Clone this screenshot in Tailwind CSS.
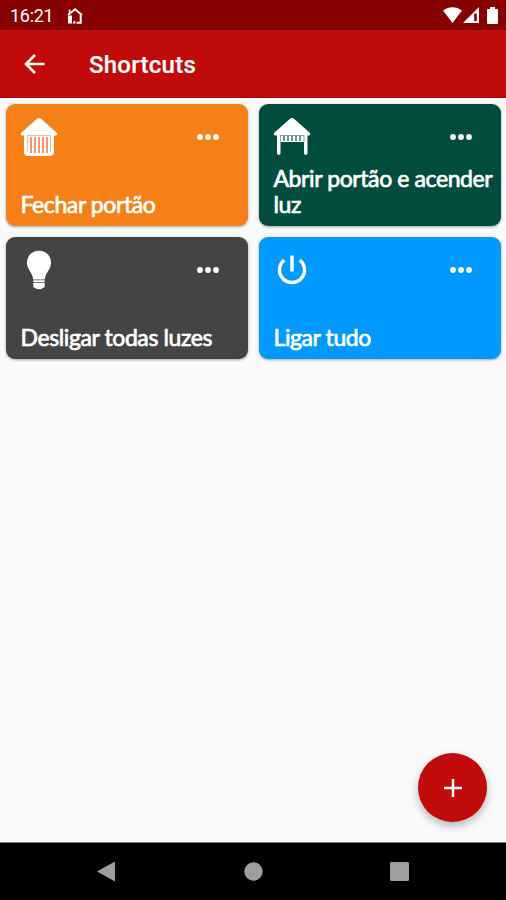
<!DOCTYPE html>
<html lang="pt">
<head>
  <meta charset="UTF-8">
  <meta name="viewport" content="width=device-width, initial-scale=1">
  <title>Shortcuts</title>
  <script src="https://cdn.jsdelivr.net/npm/@tailwindcss/browser@4"></script>
</head>
<body class="bg-[#fafafa] h-screen flex flex-col overflow-hidden font-['Roboto',sans-serif] text-white">

  <!-- Status bar -->
  <div class="h-[30px] shrink-0 bg-[#870000] flex items-center pl-[10px] pr-[8px]">
    <span class="text-[18px] leading-none tracking-[-0.3px] pt-[2px]">16:21</span>
    <svg class="ml-[14px] mt-px w-4 h-4" viewBox="0 0 16 16" fill="none" stroke="#fff" stroke-width="2">
      <path d="M1 7 8 1.300 15 7M13.700 6v8.700H9.500"/>
      <path d="M1 7.500h4v8H1z" fill="#fff" stroke="none"/>
      <path d="M2.600 5V1.500M6 14.800h1.500v-2" stroke-width="1.500"/>
    </svg>
    <svg class="ml-auto w-[19px] h-4" viewBox="0 0 19 16" fill="#fff"><path d="M0 3.600C5.500-1 13.500-1 19 3.600L9.500 16z"/></svg>
    <svg class="ml-[1px] w-4 h-4" viewBox="0 0 16 16"><path fill="#fff" d="M16 0v16H0z"/><path fill="#870000" d="M11.200 6.500h2.600V14h-2.600z"/></svg>
    <svg class="ml-[8px] w-[11px] h-[17px]" viewBox="0 0 11 17" fill="#fff"><path d="M3 0h5v2h2q1 0 1 1v13q0 1-1 1H1q-1 0-1-1V3q0-1 1-1h2z"/></svg>
  </div>

  <!-- App bar -->
  <div class="h-[68px] shrink-0 bg-[#c10a0a] border-b border-[#a80606] flex items-center pl-[24px]">
    <svg class="w-[21px] h-5" viewBox="0 0 21 20" fill="none" stroke="#fff" stroke-width="2.600"><path d="M20.500 10H2.500M11 1 2 10l9 9"/></svg>
    <h1 class="ml-[44px] text-[24px] font-medium leading-none pt-[3px] tracking-[0.25px] [-webkit-text-stroke:0.2px_white]">Shortcuts</h1>
  </div>

  <!-- Shortcut cards -->
  <main class="grow flex flex-col pl-[6px] pr-[5px] pt-[6px] pb-5 font-['Lato',sans-serif] text-[23px] leading-[26px] tracking-[-0.4px] [-webkit-text-stroke:0.7px_white]">
    <div class="grid grid-cols-2 gap-[11px]">
      <div class="h-[122px] rounded-[9px] bg-[#f58018] shadow-[0_1px_3px_rgba(0,0,0,0.35)] flex flex-col justify-between pl-[14px] pr-2 pt-[13px] pb-[9px]">
        <div class="flex">
          <svg class="w-[38px] h-10" viewBox="0 0 38 40">
            <path fill="#fff" d="M17 1.800q2-1.600 4 0L37 16q1 2-1 2.600h-2V35q0 4-4 4H8q-4 0-4-4V18.600H2Q0 18 1 16z"/>
            <path stroke="#f58018" stroke-width="1" fill="none" opacity=".5" d="M7.500 35V18.500h23V35"/>
            <path stroke="#e9602d" stroke-width="1.700" opacity=".75" d="M11 20v16M15 20v16M19 20v16M23 20v16M27 20v16"/>
          </svg>
          <svg class="ml-auto mr-[21px] mt-[17px] w-[22px] h-[6px]" viewBox="0 0 22 6" fill="#fff"><circle cx="3" cy="3" r="2.900"/><circle cx="11" cy="3" r="2.900"/><circle cx="19" cy="3" r="2.900"/></svg>
        </div>
        <p class="pl-[0.5px]">Fechar portão</p>
      </div>

      <div class="h-[122px] rounded-[9px] bg-[#004c3f] shadow-[0_1px_3px_rgba(0,0,0,0.35)] flex flex-col justify-between pl-[14px] pr-2 pt-[13px] pb-[9px]">
        <div class="flex">
          <svg class="w-[38px] h-10" viewBox="0 0 38 40">
            <path fill="#fff" d="M17 1.800q2-1.600 4 0L37 16q1 2-1 2.600h-1.500V36q0 2-1.700 2T31 36V25H7.500v11q0 2-1.700 2T4 36V18.600H2Q0 18 1 16z"/>
            <path stroke="#004c3f" stroke-width="1" fill="none" opacity=".5" d="M7.500 25v-6.500h23.500v6.500"/>
            <path stroke="#004c3f" stroke-width="1.700" opacity=".7" d="M11 19v5M15 19v5M19 19v5M23 19v5M27 19v5"/>
          </svg>
          <svg class="ml-auto mr-[21px] mt-[17px] w-[22px] h-[6px]" viewBox="0 0 22 6" fill="#fff"><circle cx="3" cy="3" r="2.900"/><circle cx="11" cy="3" r="2.900"/><circle cx="19" cy="3" r="2.900"/></svg>
        </div>
        <p class="pl-[0.5px] -mr-1">Abrir portão e acender luz</p>
      </div>

      <div class="h-[122px] rounded-[9px] bg-[#444] shadow-[0_1px_3px_rgba(0,0,0,0.35)] flex flex-col justify-between pl-[14px] pr-2 pt-[13px] pb-[9px]">
        <div class="flex">
          <svg class="w-[38px] h-10" viewBox="0 0 38 40" fill="#fff">
            <path d="M19 .8C11.500.8 7 6.300 7 12.800c0 7 5.500 9.500 6.200 16.700h11.600c.7-7.200 6.200-9.700 6.200-16.700C31 6.300 26.500.8 19 .8z"/>
            <path d="M13.300 30.200h11.400v2H13.300zM13.300 33h11.400v3q0 1.800-2 2-1 1.200-3.700 1.200T15.300 38q-2-.2-2-2z"/>
          </svg>
          <svg class="ml-auto mr-[21px] mt-[17px] w-[22px] h-[6px]" viewBox="0 0 22 6" fill="#fff"><circle cx="3" cy="3" r="2.900"/><circle cx="11" cy="3" r="2.900"/><circle cx="19" cy="3" r="2.900"/></svg>
        </div>
        <p class="pl-[0.5px]">Desligar todas luzes</p>
      </div>

      <div class="h-[122px] rounded-[9px] bg-[#0099ff] shadow-[0_1px_3px_rgba(0,0,0,0.35)] flex flex-col justify-between pl-[14px] pr-2 pt-[13px] pb-[9px]">
        <div class="flex">
          <svg class="w-[38px] h-10" viewBox="0 0 38 40" fill="none" stroke="#fff" stroke-width="3.400">
            <path d="M19 5.500v16M11.200 10.200a12.500 12.500 0 1 0 15.600 0"/>
          </svg>
          <svg class="ml-auto mr-[21px] mt-[17px] w-[22px] h-[6px]" viewBox="0 0 22 6" fill="#fff"><circle cx="3" cy="3" r="2.900"/><circle cx="11" cy="3" r="2.900"/><circle cx="19" cy="3" r="2.900"/></svg>
        </div>
        <p class="pl-[0.5px]">Ligar tudo</p>
      </div>
    </div>

    <!-- Add button -->
    <button class="mt-auto ml-auto mr-[14px] w-[69px] h-[69px] rounded-full bg-[#c10a0a] shadow-[0_4px_8px_rgba(0,0,0,0.28)] flex items-center justify-center" aria-label="Adicionar">
      <svg class="w-[18px] h-[18px]" viewBox="0 0 18 18" stroke="#fff" stroke-width="2.500"><path d="M9 0v18M0 9h18"/></svg>
    </button>
  </main>

  <!-- Navigation bar -->
  <nav class="h-[58px] shrink-0 bg-black border-t border-[#777] flex items-center pl-[97px] pr-[97px] justify-between">
    <svg class="w-[18px] h-[21px]" viewBox="0 0 18 21" fill="#9e9e9e"><path d="M18 .5v20L0 10.500z"/></svg>
    <svg class="ml-[1px] w-[19px] h-[19px]" viewBox="0 0 19 19" fill="#9e9e9e"><circle cx="9.500" cy="9.500" r="9.200"/></svg>
    <svg class="w-[19px] h-[19px]" viewBox="0 0 19 19" fill="#9e9e9e"><rect width="19" height="19" rx="1.500"/></svg>
  </nav>

</body>
</html>
